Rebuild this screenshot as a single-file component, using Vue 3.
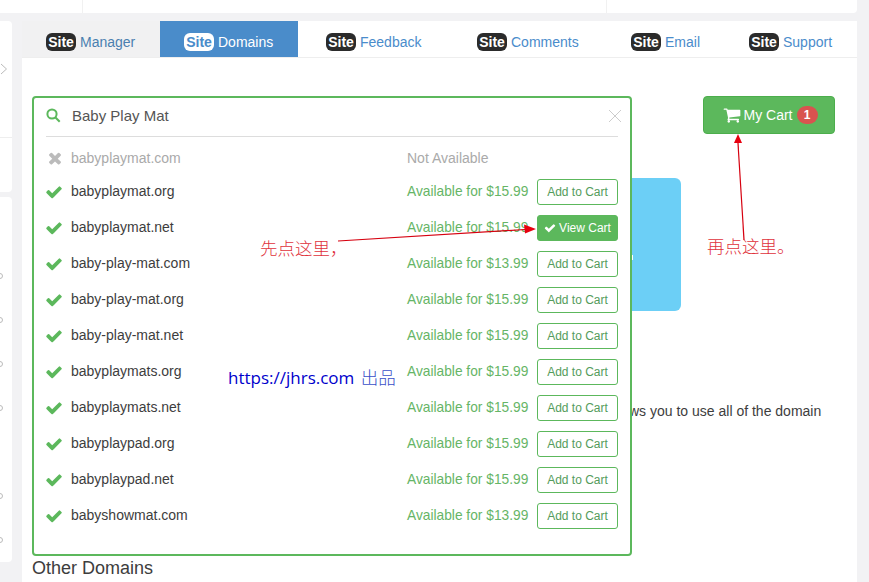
<template>
  <div class="page">
    <div class="topbar">
      <div class="top-cell first"></div>
      <div class="top-cell mid"></div>
      <div class="top-cell"></div>
    </div>

    <div class="body">
      <aside class="side">
        <div class="side-card upper">
          <div class="side-top">
            <svg class="chevron" width="8" height="12" viewBox="0 0 8 12"><path d="M1 1l5.500 5-5.500 5" fill="none" stroke="#bbb" stroke-width="1" /></svg>
          </div>
        </div>
        <div class="side-card lower">
          <span v-for="(show, i) in sideDots" :key="i" class="dot" :class="{ off: !show }"></span>
        </div>
      </aside>

      <main class="main">
        <nav class="tabs">
          <a v-for="tab in tabs" :key="tab.name" class="tab" :class="tab.kind">
            <b class="site">Site</b>
            <span>{{ tab.name }}</span>
          </a>
        </nav>

        <section class="content">
          <div class="cart-row">
            <button class="cart">
              <svg class="cart-icon" width="18" height="18" viewBox="0 0 1792 1792"><path fill="#fff" d="M704 1536q0 52-38 90t-90 38-90-38-38-90 38-90 90-38 90 38 38 90zm896 0q0 52-38 90t-90 38-90-38-38-90 38-90 90-38 90 38 38 90zm128-1088v512q0 24-16.500 42.500t-40.500 21.500l-1044 122q13 60 13 70 0 16-24 64h920q26 0 45 19t19 45-19 45-45 19h-1024q-26 0-45-19t-19-45q0-11 8-31.500t16-36 21.500-40 15.500-29.500l-177-823h-204q-26 0-45-19t-19-45 19-45 45-19h256q16 0 28.500 6.500t19.500 15.500 13 24.500 8 26 5.500 29.500 4.500 26h1201q26 0 45 19t19 45z" /></svg>
              My Cart
              <span class="count">1</span>
            </button>
          </div>

          <div class="promo"><i class="promo-mark"></i></div>

          <p class="para">ws you to use all of the domain</p>
          <h3 class="other">Other Domains</h3>

          <div class="finder">
            <div class="search">
              <svg class="lens" width="15" height="15" viewBox="0 0 15 15"><circle cx="6" cy="6" r="4.600" fill="none" stroke="#5cb85c" stroke-width="2" /><path d="M9.500 9.500l4.200 4.200" stroke="#5cb85c" stroke-width="2" /></svg>
              <span class="query">Baby Play Mat</span>
              <svg class="close" width="14" height="14" viewBox="0 0 14 14"><path d="M1 1l12 12M13 1L1 13" stroke="#ccc" stroke-width="1" /></svg>
            </div>

            <div class="row taken">
              <svg class="mark" width="18" height="18" viewBox="0 0 1792 1792"><path fill="#bbb" d="M1490 1322q0 40-28 68l-136 136q-28 28-68 28t-68-28l-294-294-294 294q-28 28-68 28t-68-28l-136-136q-28-28-28-68t28-68l294-294-294-294q-28-28-28-68t28-68l136-136q28-28 68-28t68 28l294 294 294-294q28-28 68-28t68 28l136 136q28 28 28 68t-28 68l-294 294 294 294q28 28 28 68z" /></svg>
              <span class="domain">babyplaymat.com</span>
              <span class="status">Not Available</span>
            </div>

            <div v-for="item in results" :key="item.name" class="row">
              <svg class="mark ok" width="18" height="18" viewBox="0 0 1792 1792"><path fill="#5cb85c" d="M1671 566q0 40-28 68l-724 724-136 136q-28 28-68 28t-68-28l-136-136-362-362q-28-28-28-68t28-68l136-136q28-28 68-28t68 28l294 295 656-657q28-28 68-28t68 28l136 136q28 28 28 68z" /></svg>
              <span class="domain">{{ item.name }}</span>
              <span class="status">Available for ${{ item.price }}</span>
              <button v-if="item.added" class="add added">
                <svg width="12" height="12" viewBox="0 0 1792 1792"><path fill="#fff" d="M1671 566q0 40-28 68l-724 724-136 136q-28 28-68 28t-68-28l-136-136-362-362q-28-28-28-68t28-68l136-136q28-28 68-28t68 28l294 295 656-657q28-28 68-28t68 28l136 136q28 28 28 68z" /></svg>
                View Cart
              </button>
              <button v-else class="add">Add to Cart</button>
            </div>
          </div>
        </section>
      </main>
    </div>

    <svg class="arrows" width="869" height="582" viewBox="0 0 869 582">
      <path d="M338 241L525 229.500" fill="none" stroke="#d6000f" stroke-width="1.200" />
      <path d="M536 229l-12-4.500 1 9z" fill="#e8000f" />
      <path d="M744 240L738 143" fill="none" stroke="#d6000f" stroke-width="1.200" />
      <path d="M738 134l-4 9h8z" fill="#e8000f" />
    </svg>
    <span class="note first-note">先点这里，</span>
    <span class="note second-note">再点这里。</span>
    <span class="brand">https://jhrs.com <em>出品</em></span>
  </div>
</template>

<script setup>
const tabs = [
  { name: 'Manager', kind: 'plain' },
  { name: 'Domains', kind: 'active' },
  { name: 'Feedback', kind: '' },
  { name: 'Comments', kind: '' },
  { name: 'Email', kind: '' },
  { name: 'Support', kind: '' }
]

const results = [
  { name: 'babyplaymat.org', price: '15.99' },
  { name: 'babyplaymat.net', price: '15.99', added: true },
  { name: 'baby-play-mat.com', price: '13.99' },
  { name: 'baby-play-mat.org', price: '15.99' },
  { name: 'baby-play-mat.net', price: '15.99' },
  { name: 'babyplaymats.org', price: '15.99' },
  { name: 'babyplaymats.net', price: '15.99' },
  { name: 'babyplaypad.org', price: '15.99' },
  { name: 'babyplaypad.net', price: '15.99' },
  { name: 'babyshowmat.com', price: '13.99' }
]

const sideDots = [true, true, true, true, false, true, true]
</script>

<style>
html,
body {
  margin: 0;
  background: #f2f2f4;
}
</style>

<style scoped>
.page {
  position: relative;
  width: 869px;
  height: 582px;
  overflow: hidden;
  background: #f2f2f4;
  font-family: "Liberation Sans", Arial, sans-serif;
  font-size: 14px;
  color: #3d3d3d;
}

.topbar {
  display: flex;
  width: 857px;
  height: 13px;
  background: #fff;
  border-radius: 0 0 4px 0;
}
.top-cell.first {
  width: 82px;
  border-right: 1px solid #f1f1f1;
}
.top-cell.mid {
  width: 523px;
  border-right: 1px solid #f1f1f1;
}

.body {
  display: flex;
  margin-top: 8px;
}

.side {
  width: 12px;
  margin-right: 10px;
}
.side-card {
  background: #fff;
  border-radius: 0 4px 4px 0;
}
.upper {
  height: 171px;
}
.side-top {
  height: 116px;
  border-bottom: 1px solid #eee;
  display: flex;
  align-items: flex-start;
}
.chevron {
  margin-top: 42px;
}
.lower {
  height: 365px;
  margin-top: 5px;
  padding-top: 76px;
  box-sizing: border-box;
  display: flex;
  flex-direction: column;
  gap: 38px;
}
.dot {
  width: 4px;
  height: 4px;
  margin-left: -3px;
  border: 1px solid #bbb;
  border-radius: 50%;
}
.dot.off {
  visibility: hidden;
}

.main {
  width: 835px;
  height: 561px;
  background: #fff;
}

.tabs {
  display: grid;
  grid-template-columns: 138px 138px 151px 154px 118px 136px;
  height: 36px;
  border-bottom: 1px solid #eee;
}
.tab {
  display: flex;
  align-items: center;
  gap: 4px;
  padding-left: 28px;
  padding-top: 6px;
  color: #4a8ccb;
  font-size: 14px;
}
.tab.plain {
  padding-left: 24px;
  background: #f1f1f2;
  color: #4a7fb0;
}
.tab.active {
  padding-left: 24px;
  background: #4a8cca;
  color: #fff;
}
.site {
  width: 30px;
  height: 18px;
  line-height: 18px;
  text-align: center;
  background: #2b2b2b;
  color: #fff;
  font-size: 14px;
  border-radius: 6px;
}
.active .site {
  background: #fff;
  color: #4a8cca;
}

.content {
  position: relative;
  padding: 38px 22px 0 10px;
}
.cart-row {
  display: flex;
  justify-content: flex-end;
}
.cart {
  display: flex;
  align-items: center;
  justify-content: center;
  width: 132px;
  height: 38px;
  padding: 0 0 0 2px;
  background: #5cb85c;
  border: 1px solid #4cae4c;
  border-radius: 4px;
  color: #fff;
  font: 14px "Liberation Sans", Arial, sans-serif;
}
.cart-icon {
  margin-right: 3px;
}
.count {
  width: 21px;
  height: 18px;
  margin-left: 4px;
  line-height: 18px;
  background: #d9534f;
  border-radius: 10px;
  font-size: 12px;
  font-weight: 700;
}

.promo {
  display: flex;
  justify-content: flex-end;
  width: 449px;
  height: 133px;
  margin: 44px 0 0 200px;
  padding: 77px 48px 0 0;
  box-sizing: border-box;
  background: #6ccff6;
  border-radius: 6px;
}
.promo-mark {
  width: 1px;
  height: 5px;
  background: #fff;
}

.para {
  margin: 90px 0 0 597px;
  line-height: 20px;
  white-space: nowrap;
}
.other {
  margin: 137px 0 0;
  font-size: 18px;
  font-weight: 400;
  line-height: 20px;
}

.finder {
  position: absolute;
  left: 10px;
  top: 38px;
  width: 600px;
  height: 460px;
  box-sizing: border-box;
  padding: 0 12px;
  background: #fff;
  border: 2px solid #5cb85c;
  border-radius: 4px;
}
.search {
  display: flex;
  align-items: center;
  height: 35px;
  padding-bottom: 3px;
  border-bottom: 1px solid #ddd;
}
.query {
  flex: 1;
  margin-left: 11px;
  font-size: 15px;
  color: #555;
}
.close {
  margin-right: -4px;
}
.row {
  display: flex;
  align-items: center;
  height: 36px;
}
.row.taken {
  height: 33px;
  margin-top: 4px;
  margin-bottom: -1px;
  color: #aaa;
}
.mark {
  margin-right: 7px;
}
.mark.ok {
  margin: 2px 8px 0 -1px;
}
.domain {
  width: 336px;
}
.status {
  width: 130px;
  font-size: 13.750px;
  color: #66b566;
  white-space: nowrap;
}
.taken .status {
  font-size: 14px;
  color: #aaa;
}
.add {
  display: flex;
  align-items: center;
  justify-content: center;
  gap: 3px;
  width: 81px;
  height: 26px;
  margin-top: 2px;
  padding: 0;
  background: #fff;
  border: 1px solid #5cb85c;
  border-radius: 3px;
  color: #549c5c;
  font: 12px "Liberation Sans", Arial, sans-serif;
}
.add.added {
  background: #5cb85c;
  color: #fff;
}

.arrows {
  position: absolute;
  left: 0;
  top: 0;
}
.note {
  position: absolute;
  font-family: "Noto Sans CJK SC", serif;
  font-size: 17.500px;
  font-weight: 300;
  line-height: 24px;
  color: #e0323c;
}
.first-note {
  left: 260px;
  top: 236px;
}
.second-note {
  left: 707px;
  top: 234px;
}
.brand {
  position: absolute;
  left: 228px;
  top: 364px;
  font-family: "Open Sans", "Noto Sans CJK SC", sans-serif;
  font-size: 17px;
  font-weight: 500;
  color: #0000cc;
}
.brand em {
  margin-left: 2px;
  font-family: "Noto Sans CJK SC", serif;
  font-size: 17.500px;
  font-style: normal;
  font-weight: 300;
  color: #3a4fc8;
}
</style>
